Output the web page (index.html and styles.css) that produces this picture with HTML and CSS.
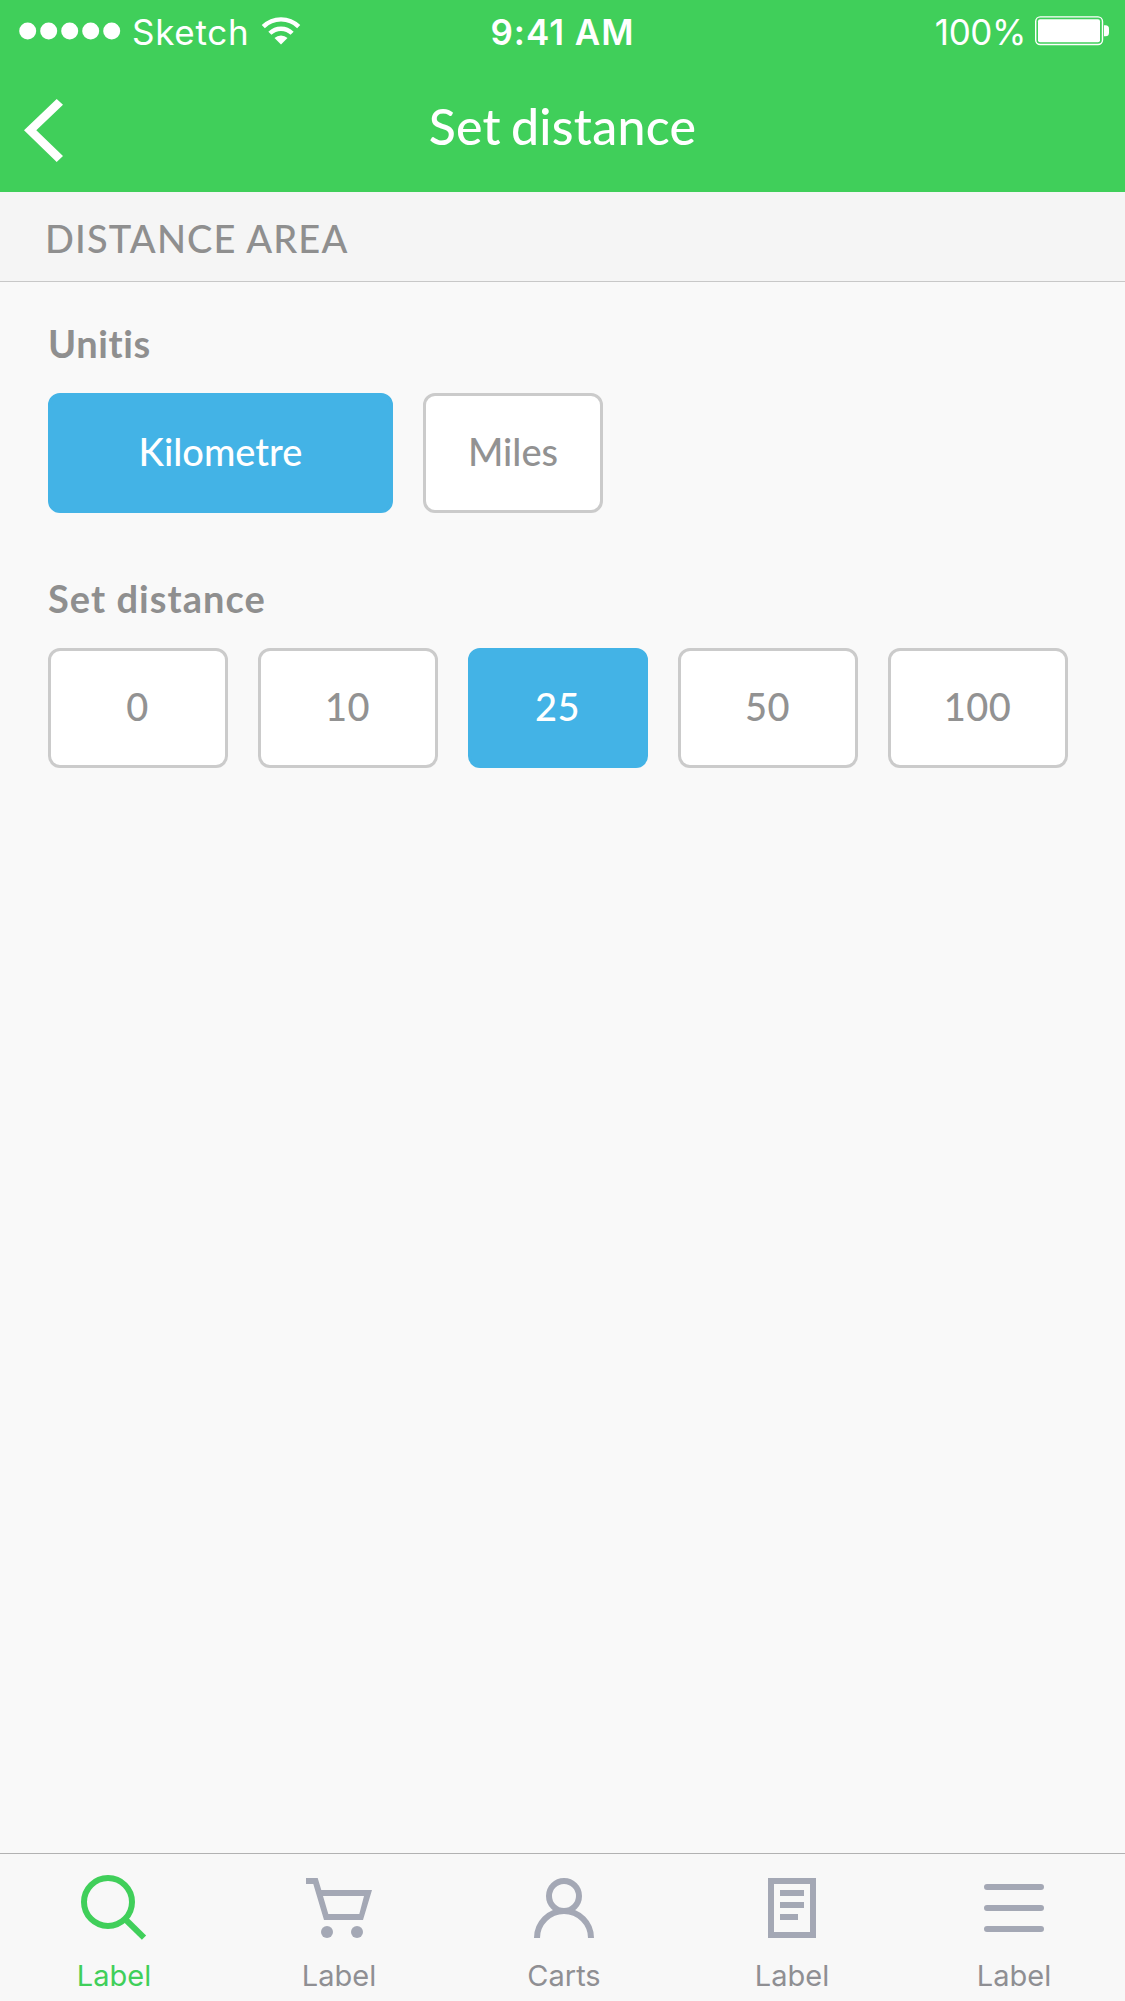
FILE: index.html
```
<!DOCTYPE html>
<html lang="en">
<head>
<meta charset="utf-8">
<title>Set distance</title>
<link rel="stylesheet" href="styles.css">
</head>
<body>
<div class="screen">
<header class="header">
  <div class="status">
    <div class="carrier">
      <svg class="signal" width="102" height="18" viewBox="0 0 102 18" fill="#fff"><circle cx="8.7" cy="9" r="8.5"/><circle cx="29.7" cy="9" r="8.5"/><circle cx="50.7" cy="9" r="8.5"/><circle cx="71.7" cy="9" r="8.5"/><circle cx="92.7" cy="9" r="8.5"/></svg>
      <span class="network">Sketch</span>
      <svg class="wifi" width="40" height="28" viewBox="0 0 40 28" fill="none" stroke="#fff" stroke-width="4.4"><path d="M2.3 9.6a25.2 25.2 0 0 1 35.4 0"/><path d="M8.9 16.3a15.8 15.8 0 0 1 22.2 0"/><path d="M20 27.4l-6.5-6.3a9.2 9.2 0 0 1 13 0z" fill="#fff" stroke="none"/></svg>
    </div>
    <time class="clock">9:41 AM</time>
    <div class="power">
      <span class="percent">100%</span>
      <svg width="75" height="30" viewBox="0 0 75 30"><rect x=".7" y=".9" width="66.8" height="27.6" rx="4.5" fill="none" stroke="#fff" stroke-width="1.4"/><rect x="3" y="3.2" width="62" height="23" rx="2" fill="#fff"/><path d="M69 9.3h1.5q3.5 0 3.5 3.5v4q0 3.5-3.5 3.5H69z" fill="#fff"/></svg>
    </div>
  </div>
  <nav class="navbar">
    <svg class="back" width="40" height="64" viewBox="0 0 40 64"><path d="M32.7 0L39 5.7 12.3 31.3 39 57 32.7 63 0 31.3z" fill="#fff"/></svg>
    <h1 class="title">Set distance</h1>
  </nav>
</header>
<main class="content">
  <h2 class="section">DISTANCE AREA</h2>
  <section class="group">
    <h3 class="label units">Unitis</h3>
    <div class="options"><button class="option wide selected">Kilometre</button><button class="option">Miles</button></div>
  </section>
  <section class="group">
    <h3 class="label">Set distance</h3>
    <div class="options"><button class="option number">0</button><button class="option number">10</button><button class="option number selected">25</button><button class="option number">50</button><button class="option number">100</button></div>
  </section>
</main>
<nav class="tabs">
  <a class="tab active"><svg class="icon" viewBox="0 0 66 66" fill="none" stroke="currentColor" stroke-width="6"><circle cx="27" cy="27" r="24"/><path d="M44 44l19 18.7"/></svg><span>Label</span></a>
  <a class="tab"><svg class="icon" viewBox="0 0 66 66" fill="currentColor"><path fill-rule="evenodd" d="M0 3h11.7l3.6 12H66l-9 30H18L7.3 9H0zM17 21l5.3 18h31L58 21z"/><circle cx="21" cy="57" r="6"/><circle cx="51" cy="57" r="6"/></svg><span>Label</span></a>
  <a class="tab"><svg class="icon" viewBox="0 0 66 66" fill="none" stroke="currentColor" stroke-width="6"><circle cx="33" cy="21" r="15"/><path d="M6 63a27 27 0 0 1 54 0"/></svg><span>Carts</span></a>
  <a class="tab"><svg class="icon" viewBox="0 0 66 66" fill="none" stroke="currentColor" stroke-width="6"><path d="M12 6h42v54H12zM21 18h24M21 30h24M21 42h18"/></svg><span>Label</span></a>
  <a class="tab"><svg class="icon" viewBox="0 0 66 66" fill="none" stroke="currentColor" stroke-width="6" stroke-linecap="round"><path d="M6 12h54M6 33h54M6 54h54"/></svg><span>Label</span></a>
</nav>
</div>
</body>
</html>
```
FILE: styles.css
```
* { box-sizing: border-box; }
body { margin: 0; background: #f9f9f9; font-family: Lato, sans-serif; color: #8f8f8f; }
h1, h2, h3 { margin: 0; }
.screen { width: 1125px; height: 2001px; display: flex; flex-direction: column; overflow: hidden; }
.header { height: 192px; background: #40cf5a; color: #fff; }
.status { height: 60px; display: grid; grid-template-columns: 1fr auto 1fr; align-items: center; font: 400 35px/60px Inter, sans-serif; }
.status span, .clock { padding-top: 2px; }
.carrier { display: flex; align-items: center; padding-left: 19px; }
.network { margin-left: 11px; letter-spacing: .7px; }
.wifi { margin-left: 12px; }
.clock { font-weight: 600; letter-spacing: 1px; }
.percent { letter-spacing: -.4px; }
.power { display: flex; align-items: center; justify-content: flex-end; gap: 9px; padding-right: 15px; }
.navbar { height: 132px; display: grid; grid-template-columns: 64px 1fr 64px; padding-top: 39px; }
.back { margin-left: 24px; }
.title { font-size: 50px; font-weight: 500; line-height: 60px; margin-top: -3px; text-align: center; letter-spacing: .3px; word-spacing: -3px; }
.content { flex: 1; }
.section { height: 90px; padding: 0 45px; background: #f5f5f5; border-bottom: 1px solid #c8c8c8; font-size: 38px; font-weight: 500; line-height: 92px; letter-spacing: 1.15px; }
.group { padding: 35px 48px 0; }
.group + .group { padding-top: 59px; }
.label { font-size: 38px; font-weight: 700; line-height: 52px; margin-bottom: 24px; letter-spacing: 1.05px; }
.label.units { letter-spacing: .6px; }
.options { display: flex; gap: 30px; }
.option { width: 180px; height: 120px; padding: 0 0 4px; border: 3px solid #cbcbcb; border-radius: 12px; background: #fff; color: #929292; font: 500 38px/1 Lato, sans-serif; }
.option.number { letter-spacing: .4px; padding-right: 1px; }
.option.wide { width: 345px; }
.option.selected { background: #43b3e6; border-color: #43b3e6; color: #fff; }
.tabs { height: 148px; border-top: 1px solid #b2b2b2; background: #f8f8f8; display: grid; grid-template-columns: 228px 222px 228px 228px 216px; padding-top: 21px; }
.tab { display: flex; flex-direction: column; align-items: center; color: #a4a8b5; font: 400 29px/36px Inter, sans-serif; }
.tab span { margin-top: 17px; color: #8f8f93; }
.icon { width: 66px; height: 66px; }
.active, .tab.active span { color: #40cf5a; }
```
